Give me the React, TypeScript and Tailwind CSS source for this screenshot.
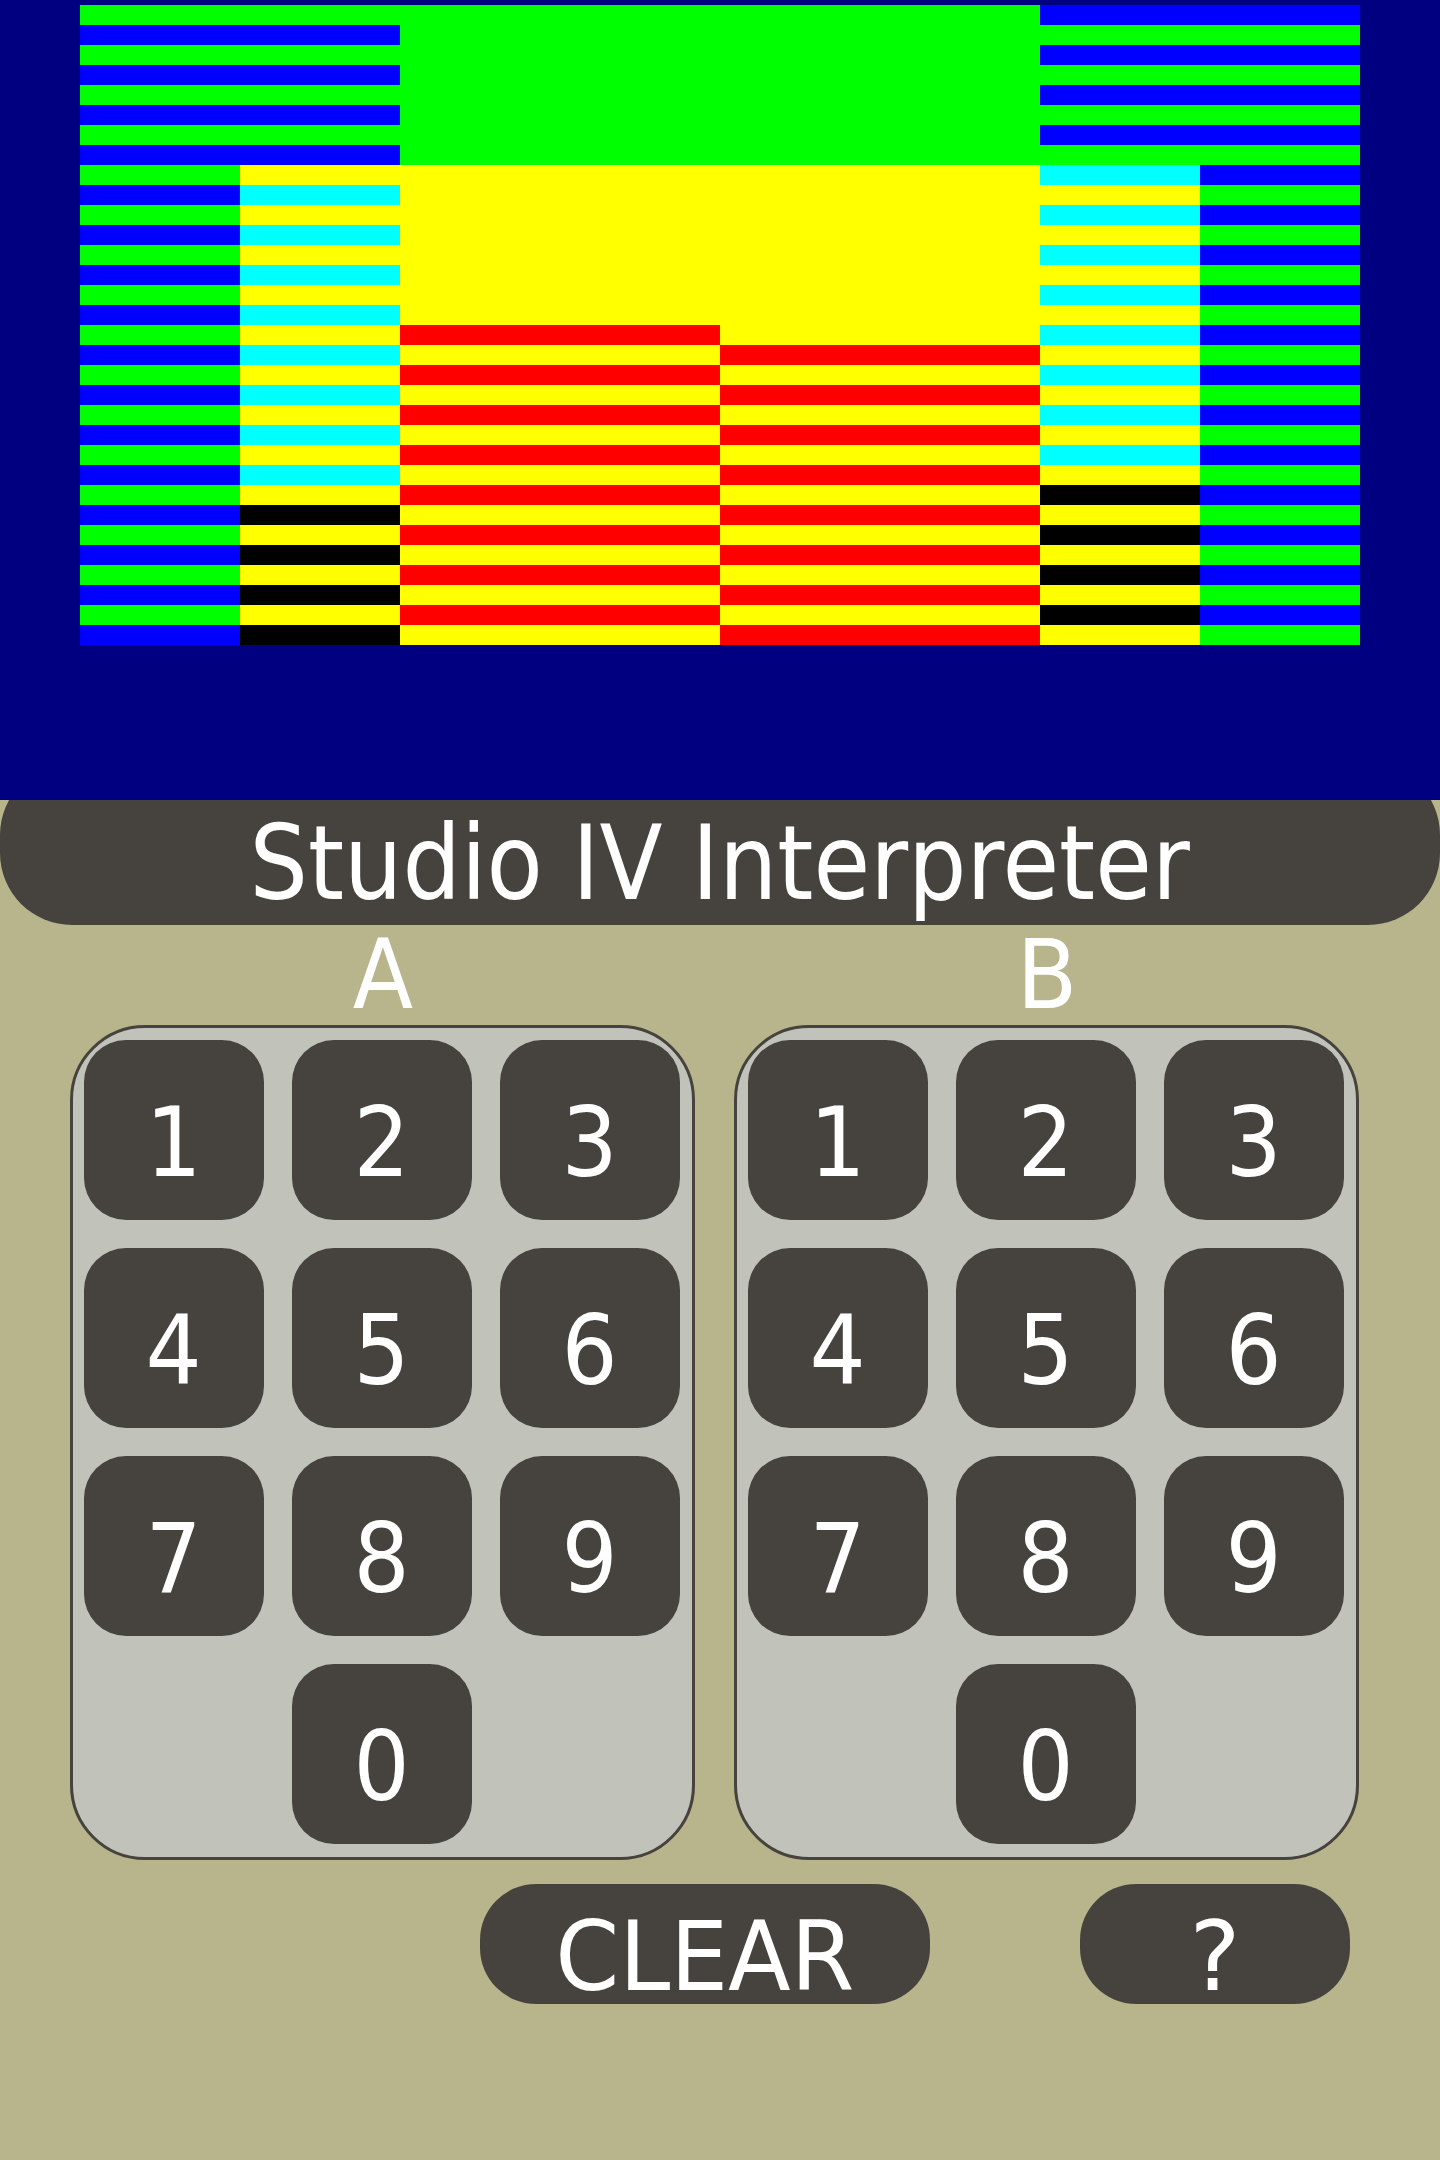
import React from "react";

const G = "bg-[#00ff00]";
const B = "bg-[#0000ff]";
const Y = "bg-[#ffff00]";
const C = "bg-[#00ffff]";
const R = "bg-[#ff0000]";
const K = "bg-[#000000]";

function cellColor(col: number, row: number): string {
  const even = row % 2 === 0;
  switch (col) {
    case 0:
      return even ? G : B;
    case 1:
      if (row < 8) return even ? G : B;
      return even ? Y : row <= 23 ? C : K;
    case 2:
      if (row < 8) return G;
      if (row < 16) return Y;
      return even ? R : Y;
    case 3:
      if (row < 8) return G;
      if (row < 17) return Y;
      return even ? Y : R;
    case 4:
      if (row < 8) return even ? B : G;
      return even ? (row <= 22 ? C : K) : Y;
    default:
      return even ? B : G;
  }
}

const widths = ["w-[160px]", "w-[160px]", "w-[320px]", "w-[320px]", "w-[160px]", "w-[160px]"];
const rows = Array.from({ length: 32 }, (_, i) => i);

function Key({ label, extra = "" }: { label: string; extra?: string }) {
  return (
    <div
      className={
        "h-[180px] w-[180px] rounded-[42px] bg-[#46433e] flex items-center justify-center pt-[26px] text-white text-[96px] leading-none " +
        extra
      }
    >
      <span className="inline-block scale-x-[0.92]">{label}</span>
    </div>
  );
}

function Pad({ name }: { name: string }) {
  return (
    <div className="flex w-[625px] flex-col">
      <div className="h-[100px] pt-[2px] text-center text-[96px] leading-none text-white">
        <span className="inline-block scale-x-[0.92]">{name}</span>
      </div>
      <div className="h-[835px] w-[625px] rounded-[75px] border-[3px] border-[#46433e] bg-[#c1c3ba] pl-[11px] pt-[12px]">
        <div className="grid grid-cols-[180px_180px_180px] gap-[28px]">
          {["1", "2", "3", "4", "5", "6", "7", "8", "9"].map((d) => (
            <Key key={d} label={d} />
          ))}
          <Key label="0" extra="col-start-2" />
        </div>
      </div>
    </div>
  );
}

export default function App() {
  return (
    <div className="flex h-[2160px] w-[1440px] flex-col overflow-hidden bg-[#b8b48c] font-['DejaVu_Sans','Liberation_Sans',sans-serif]">
      <div className="relative z-10 h-[800px] shrink-0 bg-[#000080] pl-[80px] pt-[5px]">
        <div className="flex">
          {widths.map((w, c) => (
            <div key={c} className={w + " flex flex-col"}>
              {rows.map((r) => (
                <div key={r} className={"h-[20px] " + cellColor(c, r)} />
              ))}
            </div>
          ))}
        </div>
      </div>

      <div className="-mt-[37px] flex h-[162px] shrink-0 items-center justify-center rounded-[72px] bg-[#46433e] pt-[37px]">
        <span className="inline-block whitespace-nowrap text-[104px] leading-none text-white scale-x-[0.886]">
          Studio IV Interpreter
        </span>
      </div>

      <div className="flex gap-[39px] pl-[70px]">
        <Pad name="A" />
        <Pad name="B" />
      </div>

      <div className="mt-[24px] flex">
        <div className="ml-[480px] flex h-[120px] w-[450px] items-center justify-center rounded-[56px] bg-[#46433e] pt-[26px] text-[96px] leading-none text-white">
          <span className="inline-block scale-x-[0.954]">CLEAR</span>
        </div>
        <div className="ml-[150px] flex h-[120px] w-[270px] items-center justify-center rounded-[56px] bg-[#46433e] pt-[26px] text-[96px] leading-none text-white">
          <span className="inline-block">?</span>
        </div>
      </div>
    </div>
  );
}
